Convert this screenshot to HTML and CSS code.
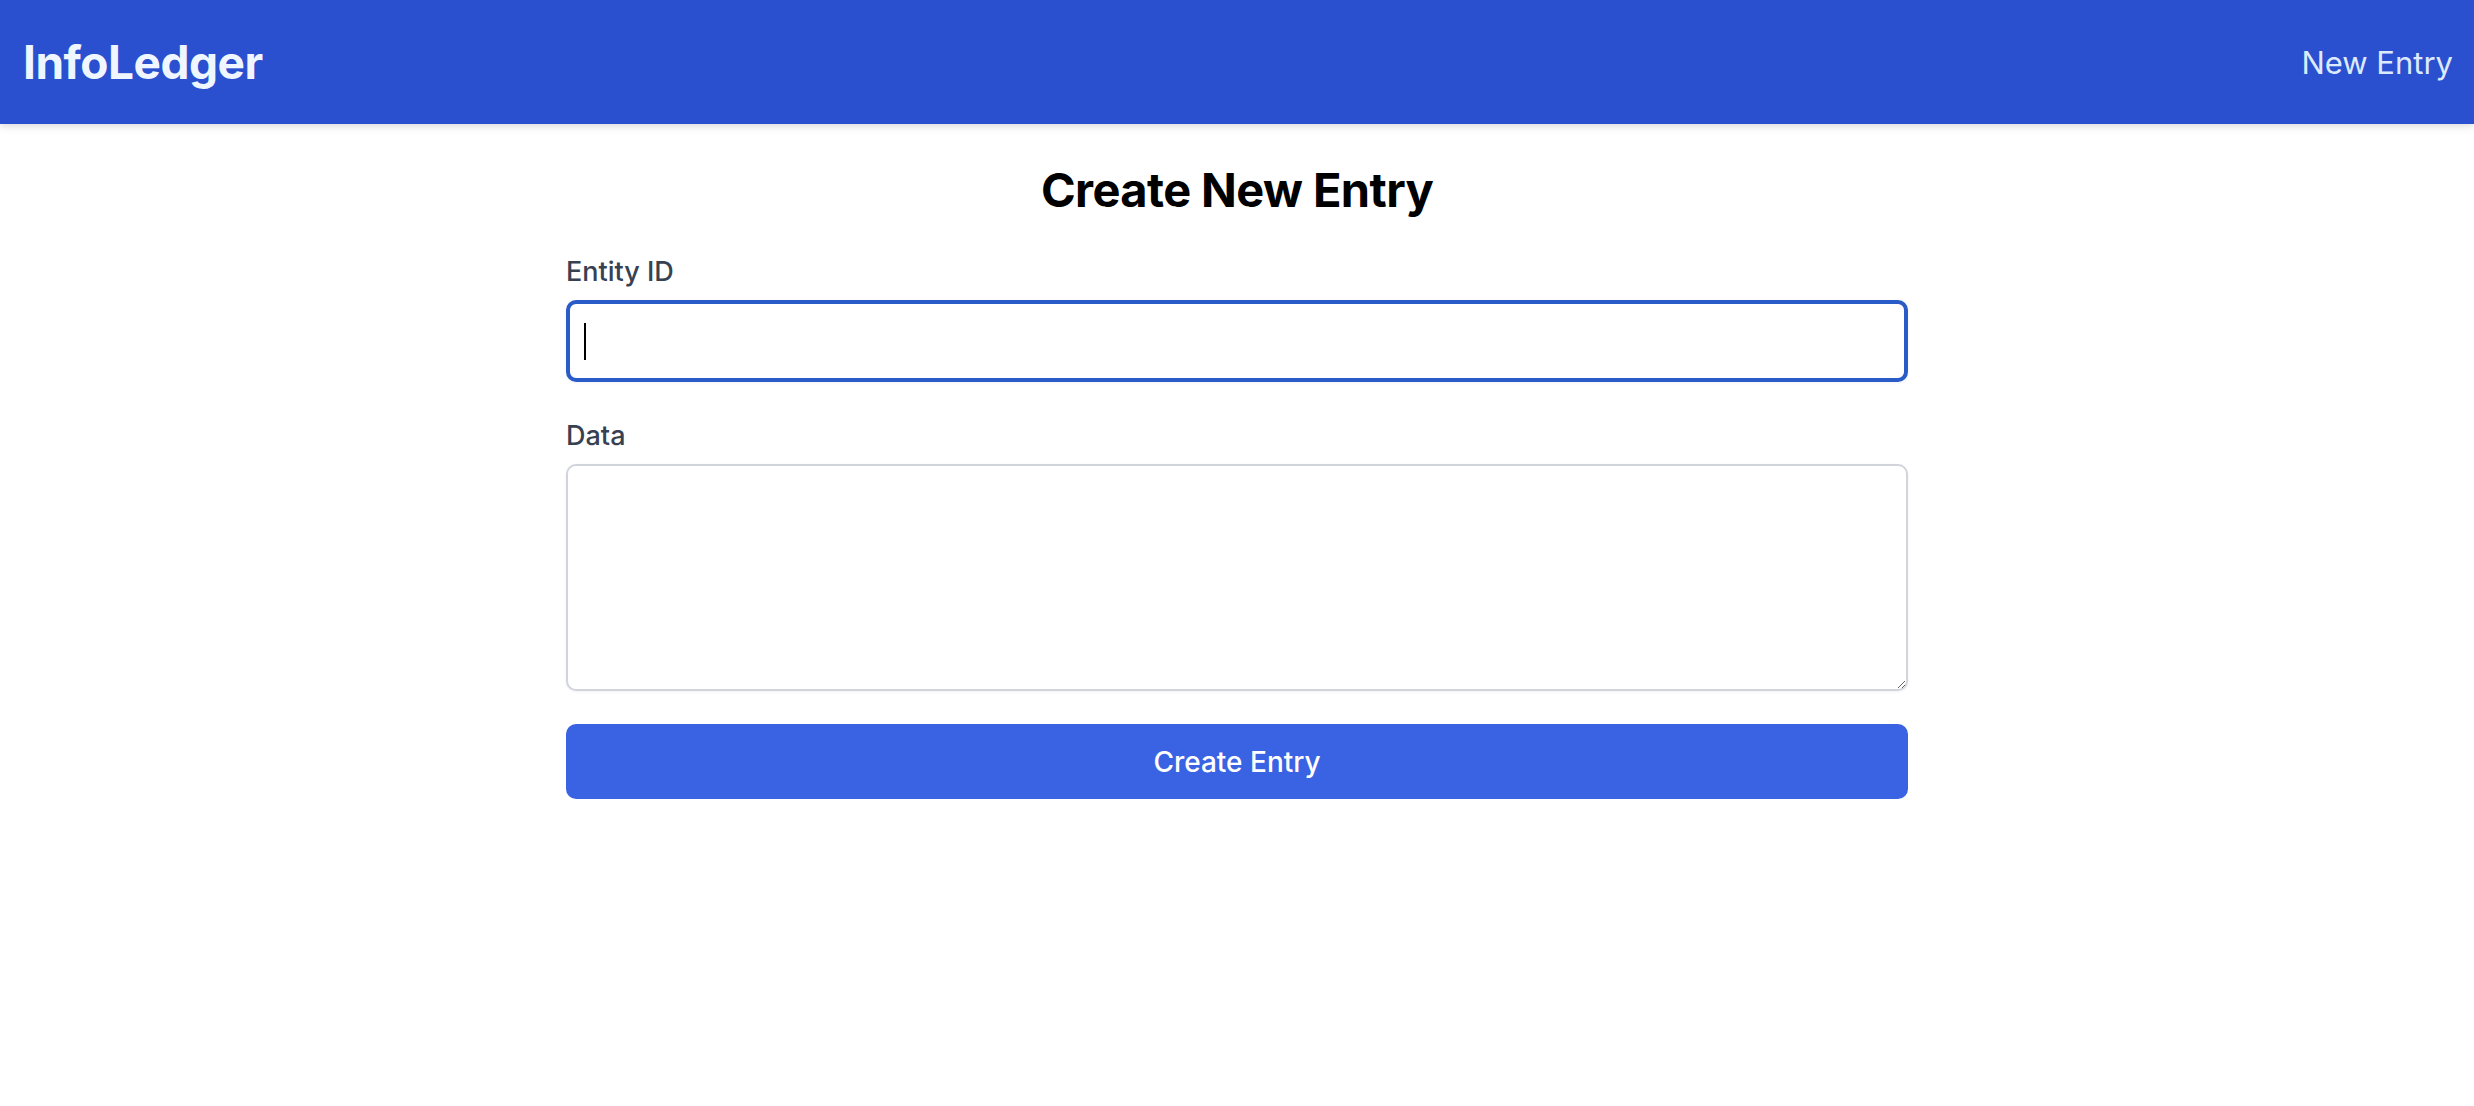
FILE: index.html
```html
<!DOCTYPE html>
<html lang="en">
<head>
<meta charset="utf-8">
<title>InfoLedger - Create New Entry</title>
<link rel="stylesheet" href="styles.css">
</head>
<body>
<header class="topbar">
  <a class="brand" href="#">InfoLedger</a>
  <nav class="nav"><a class="nav-link" href="#">New Entry</a></nav>
</header>
<main class="page">
  <h1 class="title">Create New Entry</h1>
  <form class="entry-form">
    <div class="field">
      <label class="label" for="entity">Entity ID</label>
      <div class="input-wrap">
        <input class="input input-focused" id="entity" type="text">
        <span class="caret"></span>
      </div>
    </div>
    <div class="field field-last">
      <label class="label" for="data">Data</label>
      <textarea class="input textarea" id="data"></textarea>
    </div>
    <button class="submit" type="button">Create Entry</button>
  </form>
</main>
</body>
</html>
```
FILE: styles.css
```css
* { box-sizing: border-box; }
html, body { margin: 0; padding: 0; background: #ffffff; }
body { font-family: Inter, "Noto Sans", "Liberation Sans", sans-serif; color: #000; }

.topbar {
  height: 124px;
  background: #2a4fcf;
  display: flex;
  align-items: center;
  justify-content: space-between;
  padding: 0 21px 0 23px;
  box-shadow: 0 4px 8px rgba(0,0,0,0.08), 0 2px 4px rgba(0,0,0,0.05);
  position: relative;
}
.brand {
  color: #eff6ff;
  font-weight: 700;
  font-size: 46px;
  text-decoration: none;
  letter-spacing: -0.5px;
}
.nav-link {
  color: #dbeafe;
  font-size: 31px;
  text-decoration: none;
}

.page {
  padding-top: 38px;
  display: flex;
  flex-direction: column;
  align-items: center;
}
.title {
  margin: 0;
  font-size: 47px;
  line-height: 56px;
  font-weight: 700;
  letter-spacing: -0.6px;
}
.entry-form {
  width: 1342px;
  margin-top: 34px;
  display: flex;
  flex-direction: column;
}
.field {
  display: flex;
  flex-direction: column;
  gap: 8px;
  margin-bottom: 34px;
}
.field-last { margin-bottom: 33px; }
.label {
  font-size: 27px;
  line-height: 40px;
  font-weight: 500;
  color: #374151;
}
.input-wrap { position: relative; }
.input {
  width: 100%;
  font-family: inherit;
  font-size: 27px;
  border: 2px solid #d1d5db;
  border-radius: 10px;
  background: #fff;
  padding: 8px 16px;
  box-shadow: 0 1px 3px rgba(0,0,0,0.06);
  outline: none;
  display: block;
}
.input-focused {
  height: 82px;
  border: 4px solid #2a5cc8;
}
.caret {
  position: absolute;
  left: 18px;
  top: 23px;
  width: 2px;
  height: 37px;
  background: #000;
}
.textarea {
  height: 227px;
  resize: vertical;
}
.submit {
  height: 75px;
  border: none;
  border-radius: 10px;
  background: #3a63e3;
  color: #ffffff;
  font-family: inherit;
  font-size: 28px;
  font-weight: 500;
  cursor: pointer;
}
```
